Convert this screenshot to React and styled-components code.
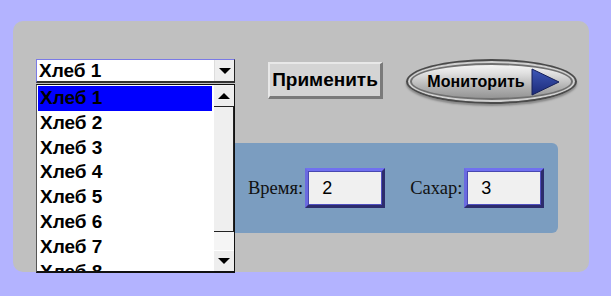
import styled, { createGlobalStyle } from 'styled-components';

const GlobalStyle = createGlobalStyle`
  body {
    margin: 0;
    background: #b3b3ff;
    font-family: "Liberation Sans", Arial, sans-serif;
  }
`;

const Page = styled.div`
  width: 611px;
  height: 296px;
  padding: 21px 0 0 13px;
  box-sizing: border-box;
`;

const Panel = styled.div`
  position: relative;
  width: 576px;
  height: 251px;
  background: #c0c0c0;
  border-radius: 10px;
  box-sizing: border-box;
  padding-top: 38px;
`;

const TopRow = styled.div`
  display: flex;
  align-items: flex-start;
  padding-left: 23px;
  height: 84px;
`;

const SelectWrap = styled.div`
  position: relative;
  width: 199px;
`;

const SelectBox = styled.div`
  display: flex;
  align-items: stretch;
  height: 24px;
  background: #fff;
  border-top: 1px solid #7a7ae6;
  border-left: 1px solid #7a7ae6;
  border-right: 1px solid #222;
  border-bottom: 2px solid #333;
  box-sizing: border-box;
`;

const SelectText = styled.div`
  flex: 1;
  font-size: 19px;
  font-weight: bold;
  line-height: 22px;
  padding-left: 2px;
  color: #000;
`;

const ArrowButton = styled.div`
  width: 19px;
  background: #eeeeee;
  display: flex;
  align-items: center;
  justify-content: center;
  border-left: 1px solid #ddd;
`;

const Arrow = styled.div`
  width: 0;
  height: 0;
  border-left: 6px solid transparent;
  border-right: 6px solid transparent;
  border-top: ${p => (p.$up ? 'none' : '6px solid #000')};
  border-bottom: ${p => (p.$up ? '6px solid #000' : 'none')};
`;

const List = styled.div`
  position: absolute;
  top: 25px;
  left: 0;
  z-index: 5;
  width: 199px;
  height: 189px;
  background: #fff;
  border: 1px solid #111;
  border-left-color: #555;
  border-bottom: 2px solid #111;
  box-sizing: border-box;
  display: flex;
  overflow: hidden;
`;

const Options = styled.div`
  flex: 1;
  padding: 1px 0 0 1px;
  overflow: hidden;
`;

const Option = styled.div`
  height: 24.8px;
  width: 174px;
  font-size: 19px;
  font-weight: bold;
  line-height: 24px;
  padding-left: 2px;
  box-sizing: border-box;
  background: ${p => (p.$selected ? '#0000ff' : 'transparent')};
  color: #000;
`;

const ScrollBar = styled.div`
  width: 20px;
  display: flex;
  flex-direction: column;
  background: #f5f5f5;
  padding-top: 1px;
`;

const ScrollButton = styled.div`
  height: 20px;
  background: #eeeeee;
  display: flex;
  align-items: center;
  justify-content: center;
  border-bottom: ${p => (p.$up ? '1px solid #222' : 'none')};
  border-top: ${p => (p.$up ? 'none' : '1px solid #fff')};
`;

const Thumb = styled.div`
  height: 125px;
  background: #efefef;
  border-right: 1px solid #222;
  border-bottom: 1px solid #222;
  box-sizing: border-box;
`;

const Track = styled.div`
  flex: 1;
`;

const ApplyButton = styled.button`
  margin: 3px 0 0 33px;
  width: 115px;
  height: 37px;
  background: #d4d4d4;
  border: none;
  border-top: 2px solid #e8e8e8;
  border-left: 2px solid #e8e8e8;
  border-right: 3px solid #7a7a7a;
  border-bottom: 3px solid #7a7a7a;
  font-family: "Liberation Sans", Arial, sans-serif;
  font-size: 19px;
  font-weight: bold;
  color: #000;
  padding: 0;
  box-sizing: border-box;
`;

const MonitorButton = styled.button`
  margin: 0 0 0 23px;
  width: 171px;
  height: 45px;
  border-radius: 50%;
  border: 2px solid #4a4a4a;
  background: linear-gradient(#ffffff 0%, #e0e0e0 30%, #b0b0b0 65%, #8a8a8a 100%);
  box-shadow: inset 0 0 0 2px #d0d0d0, inset 0 0 0 4px #707070, 0 2px 2px #888;
  display: flex;
  align-items: center;
  justify-content: center;
  gap: 5px;
  padding: 0 0 0 4px;
  font-family: "Liberation Sans", Arial, sans-serif;
  font-size: 16px;
  font-weight: bold;
  color: #000;
  box-sizing: border-box;
`;

const BluePanel = styled.div`
  margin: 0 0 0 187px;
  width: 358px;
  height: 90px;
  background: #7b9dc0;
  border-radius: 6px;
  display: flex;
  align-items: center;
  padding-left: 48px;
  box-sizing: border-box;
`;

const Field = styled.label`
  display: flex;
  align-items: center;
  margin-right: ${p => p.$gap || 0}px;
  font-family: "Liberation Serif", "Times New Roman", serif;
  font-size: 18.5px;
  color: #111;
`;

const ValueBox = styled.div`
  margin-left: 2px;
  width: 80px;
  height: 40px;
  box-sizing: border-box;
  background: #f0f0f0;
  border-style: solid;
  border-width: 3px;
  border-color: #7070f0 #2c2c6c #2c2c6c #6a6ae0;
  box-shadow: inset 1px 1px 0 #4848b0, inset -1px -1px 0 #5050c0;
  font-family: "Liberation Sans", Arial, sans-serif;
  font-size: 18px;
  line-height: 34px;
  padding-left: 14px;
  color: #000;
`;

const items = ['Хлеб 1', 'Хлеб 2', 'Хлеб 3', 'Хлеб 4', 'Хлеб 5', 'Хлеб 6', 'Хлеб 7', 'Хлеб 8'];

function PlayIcon() {
  return (
    <svg width="30" height="28" viewBox="0 0 30 28">
      <defs>
        <linearGradient id="pl" x1="0" y1="0" x2="0" y2="1">
          <stop offset="0" stopColor="#3e58b8" />
          <stop offset="1" stopColor="#1c2a78" />
        </linearGradient>
      </defs>
      <polygon points="2,1 29,14 2,27" fill="url(#pl)" stroke="#16205a" strokeWidth="1" />
    </svg>
  );
}

export default function App() {
  return (
    <>
      <GlobalStyle />
      <Page>
        <Panel>
          <TopRow>
            <SelectWrap>
              <SelectBox>
                <SelectText>Хлеб 1</SelectText>
                <ArrowButton>
                  <Arrow />
                </ArrowButton>
              </SelectBox>
              <List>
                <Options>
                  {items.map((it, i) => (
                    <Option key={it} $selected={i === 0}>{it}</Option>
                  ))}
                </Options>
                <ScrollBar>
                  <ScrollButton $up>
                    <Arrow $up />
                  </ScrollButton>
                  <Thumb />
                  <Track />
                  <ScrollButton>
                    <Arrow />
                  </ScrollButton>
                </ScrollBar>
              </List>
            </SelectWrap>
            <ApplyButton>Применить</ApplyButton>
            <MonitorButton>
              Мониторить
              <PlayIcon />
            </MonitorButton>
          </TopRow>
          <BluePanel>
            <Field $gap={25}>
              Время:
              <ValueBox>2</ValueBox>
            </Field>
            <Field>
              Сахар:
              <ValueBox>3</ValueBox>
            </Field>
          </BluePanel>
        </Panel>
      </Page>
    </>
  );
}
